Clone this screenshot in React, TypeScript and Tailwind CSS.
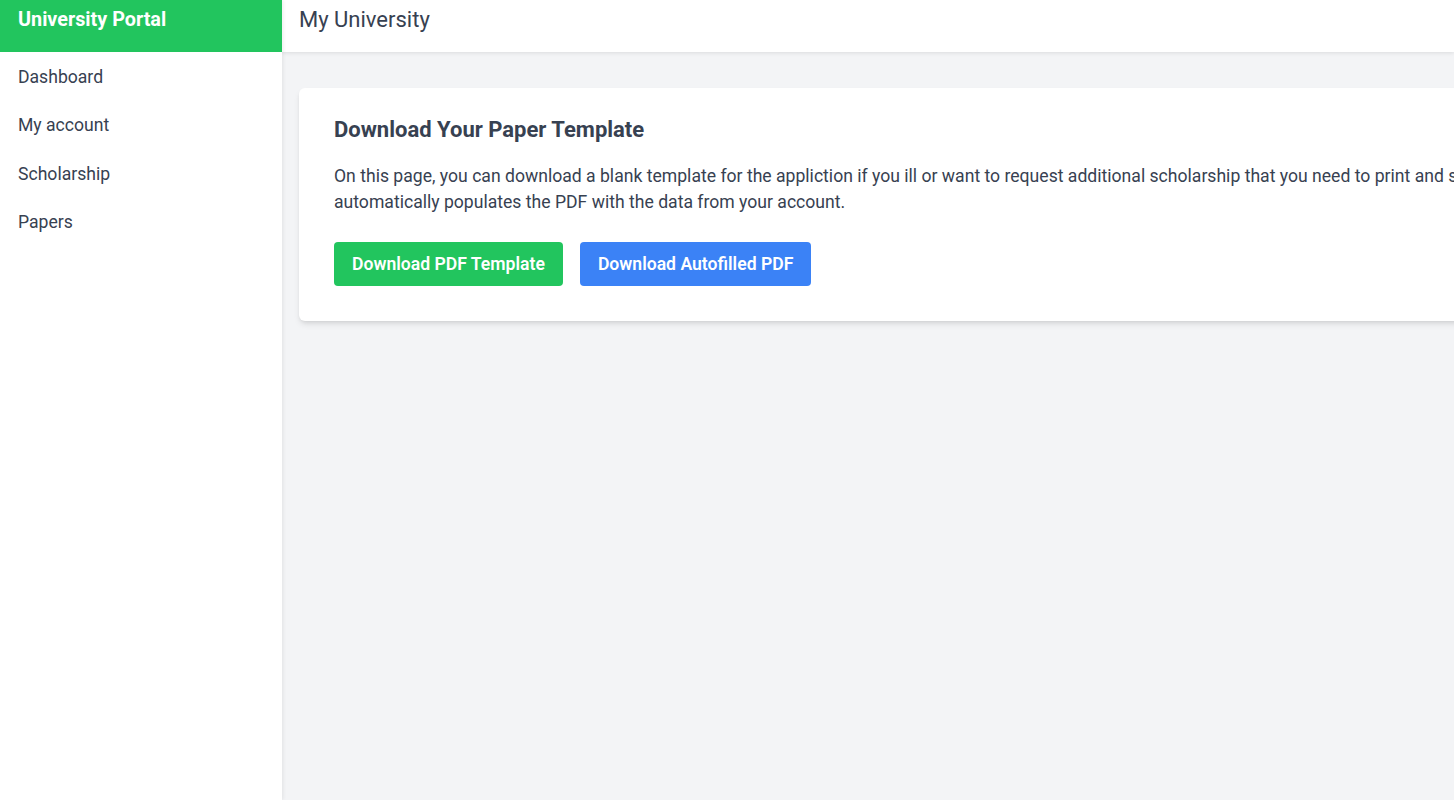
import React from "react";

const navItems = ["Dashboard", "My account", "Scholarship", "Papers"];

export default function App() {
  return (
    <div
      className="flex h-screen w-full overflow-hidden bg-[#f3f4f6] text-[#374151]"
      style={{ fontFamily: "Roboto, 'Liberation Sans', sans-serif" }}
    >
      <aside className="relative z-20 flex w-[282px] shrink-0 flex-col bg-white shadow-[1px_0_4px_rgba(0,0,0,0.08)]">
        <div className="h-[52px] bg-[#22c55e] px-[18px] pt-[6px] text-[19.8px] leading-[28px] font-bold text-white">
          University Portal
        </div>
        <nav className="flex flex-col pt-[1px]">
          {navItems.map((item) => (
            <a
              key={item}
              href="#"
              className="px-[18px] py-[11px] text-[17.6px] leading-[26.4px] text-[#374151]"
            >
              {item}
            </a>
          ))}
        </nav>
      </aside>

      <main className="flex min-w-0 flex-1 flex-col">
        <header className="relative z-10 h-[52px] shrink-0 bg-white px-[17px] pt-[5px] text-[22px] leading-[30px] text-[#374151] shadow-[0_1px_4px_rgba(0,0,0,0.1)]">
          My University
        </header>

        <div className="px-[17px] pt-[36px]">
          <div className="w-[1600px] rounded-md bg-white px-[35px] pb-[35px] pt-[28px] shadow-md">
            <h2 className="text-[22px] leading-[28px] font-bold text-[#374151]">
              Download Your Paper Template
            </h2>
            <p className="mt-[19px] whitespace-nowrap text-[17.6px] leading-[26px] text-[#374151]">
              On this page, you can download a blank template for the appliction if you ill or want to request additional scholarship that you need to print and sign by hand, or the second option which
              <br />
              automatically populates the PDF with the data from your account.
            </p>
            <div className="mt-[27px] flex gap-[17px]">
              <button className="rounded-[4px] bg-[#22c55e] px-[18px] py-[9px] text-[17.6px] leading-[26px] font-semibold text-white">
                Download PDF Template
              </button>
              <button className="rounded-[4px] bg-[#3b82f6] px-[18px] py-[9px] text-[17.6px] leading-[26px] font-semibold text-white">
                Download Autofilled PDF
              </button>
            </div>
          </div>
        </div>
      </main>
    </div>
  );
}
